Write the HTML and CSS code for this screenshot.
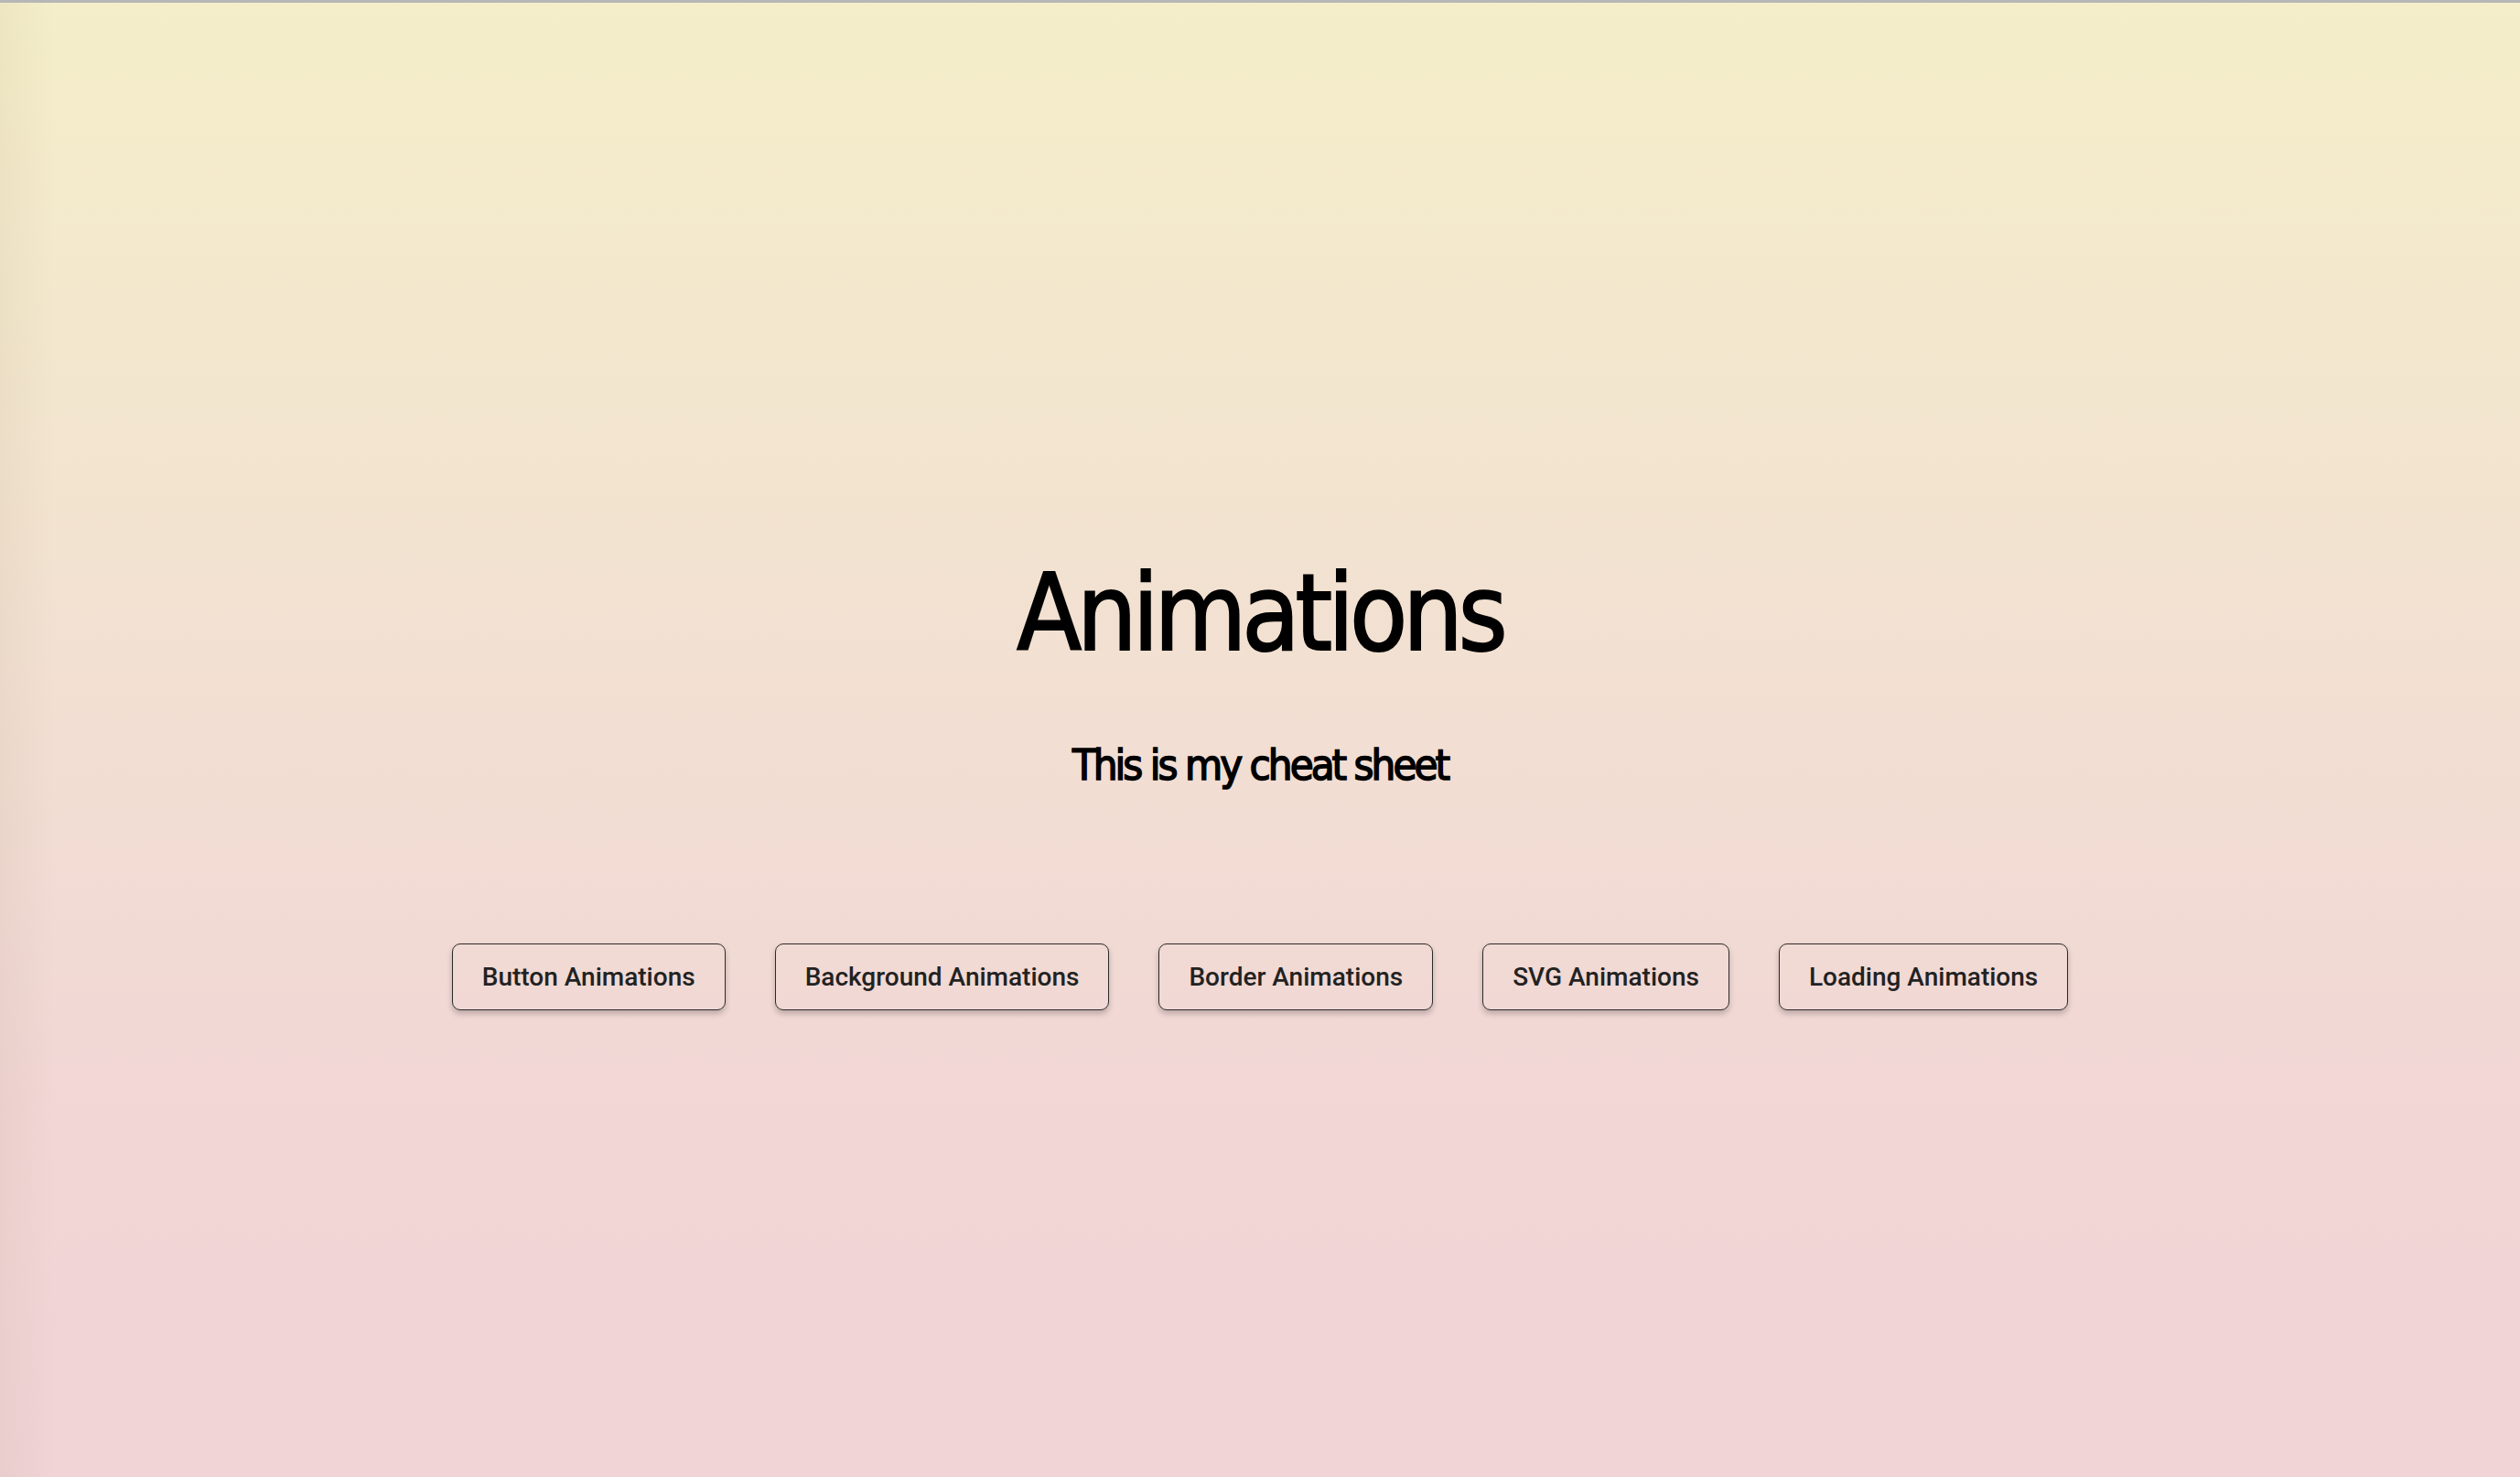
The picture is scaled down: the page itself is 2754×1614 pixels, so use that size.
FILE: index.html
```html
<!DOCTYPE html>
<html lang="en">
<head>
<meta charset="utf-8">
<title>Animations</title>
<link rel="stylesheet" href="styles.css">
</head>
<body>
<div class="topbar"></div>
<main class="hero">
  <h1 class="title">Animations</h1>
  <p class="subtitle">This is my cheat sheet</p>
  <nav class="links">
    <a class="btn" href="#">Button Animations</a>
    <a class="btn" href="#">Background Animations</a>
    <a class="btn" href="#">Border Animations</a>
    <a class="btn" href="#">SVG Animations</a>
    <a class="btn" href="#">Loading Animations</a>
  </nav>
</main>
</body>
</html>
```
FILE: styles.css
```css
html, body {
  margin: 0;
  padding: 0;
  height: 100%;
}
body {
  min-height: 1614px;
  background:
    linear-gradient(to right, rgba(120, 100, 60, 0.06), rgba(120, 100, 60, 0) 60px),
    linear-gradient(to bottom, #f4eec9 0%, #f2e0d2 45%, #f1d6d5 75%, #f0d4d6 100%);
  font-family: "Roboto", "Liberation Sans", sans-serif;
  overflow: hidden;
}
.topbar {
  height: 3px;
  background: #b6b6b6;
}
.hero {
  display: flex;
  flex-direction: column;
  align-items: center;
  padding-top: 610px;
}
.title {
  margin: 0;
  font-family: "DejaVu Sans Condensed", "DejaVu Sans", sans-serif;
  font-weight: 400;
  font-size: 115px;
  letter-spacing: -5px;
  line-height: 1;
  color: #000;
  -webkit-text-stroke: 2px #000;
}
.subtitle {
  margin: 84px 0 0;
  font-family: "DejaVu Sans Condensed", "DejaVu Sans", sans-serif;
  font-weight: 400;
  font-size: 47px;
  letter-spacing: -3px;
  line-height: 1;
  color: #000;
  -webkit-text-stroke: 1.5px #000;
}
.links {
  margin-top: 172px;
  display: flex;
  gap: 54px;
  justify-content: center;
}
.btn {
  display: block;
  padding: 19px 32px;
  line-height: 33px;
  font-size: 28px;
  font-weight: 500;
  color: #222;
  text-decoration: none;
  border: 1px solid #2a2a2a;
  border-radius: 9px;
  box-shadow: 0 4px 6px rgba(0, 0, 0, 0.22);
}
```
